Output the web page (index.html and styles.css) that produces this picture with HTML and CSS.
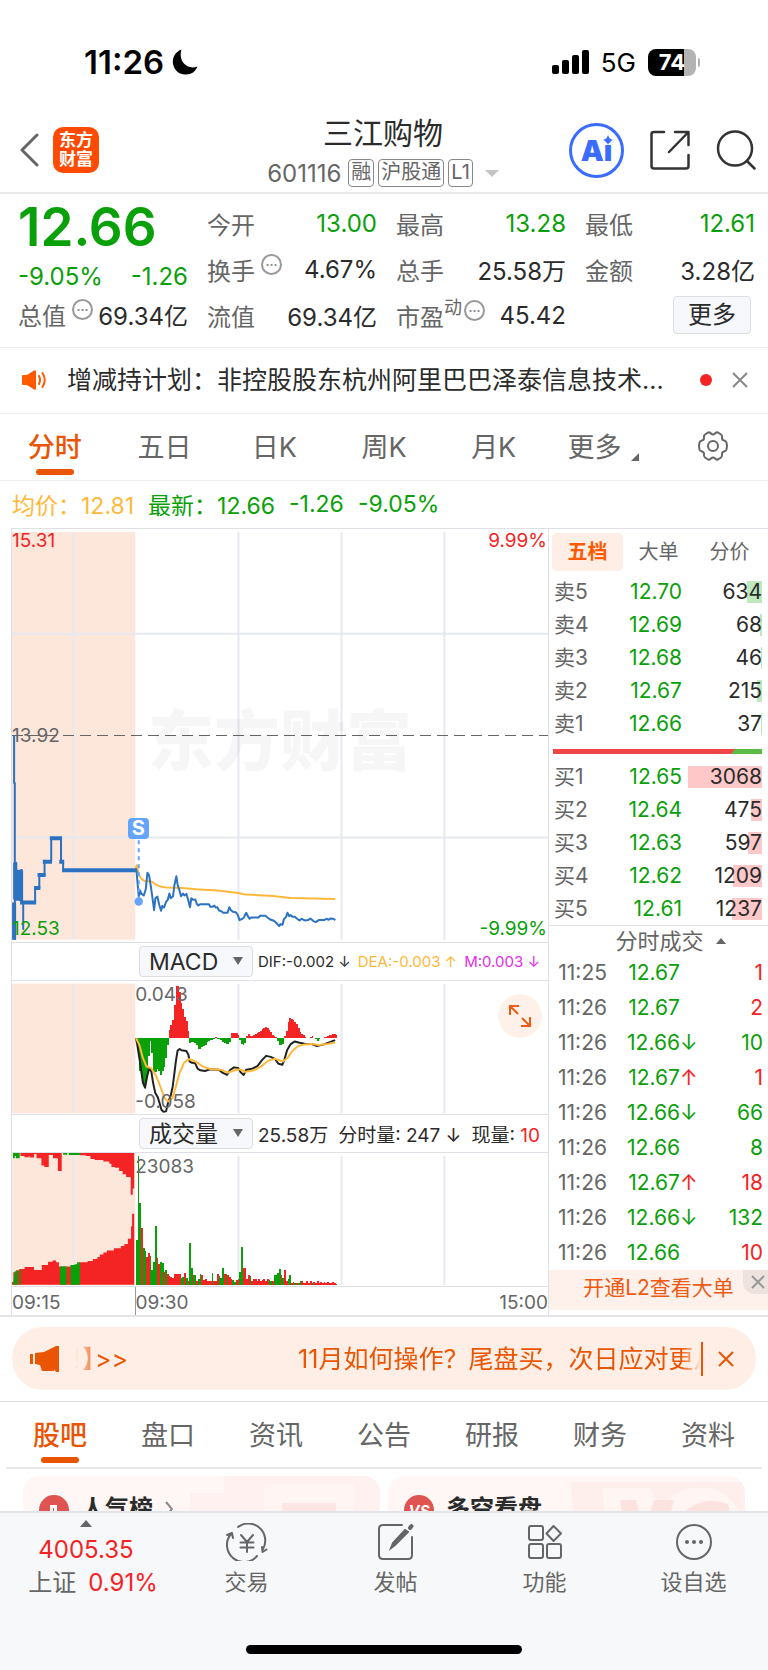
FILE: index.html
```html
<!DOCTYPE html>
<html lang="zh-CN">
<head>
  <meta charset="UTF-8">
  <meta name="viewport" content="width=device-width, initial-scale=1.0">
  <title>三江购物 601116</title>
  <link rel="stylesheet" href="styles.css">
</head>
<body>

  <div class="statusbar">
    <div class="status-left">
      <span class="clock">11:26</span>
      <svg width="26" height="26" viewBox="0 0 26 26"><path d="M9.500 0.500C3 3 0 9 1 15C2.500 22 8 26 14 25.500C19.500 25.500 23.500 22.500 25.500 17.500C20 19.500 14.500 18 11.500 14C8.500 10 8 5 9.500 0.500Z" fill="#000"/></svg>
    </div>
    <div class="status-right">
      <svg width="37" height="24" viewBox="0 0 37 24">
        <rect x="0" y="15" width="7" height="9" rx="2"/>
        <rect x="10" y="10" width="7" height="14" rx="2"/>
        <rect x="20" y="5" width="7" height="19" rx="2"/>
        <rect x="30" y="0" width="7" height="24" rx="2"/>
      </svg>
      <span class="network">5G</span>
      <span class="battery">74</span>
    </div>
  </div>

  <header class="header">
    <div class="header-left">
      <button class="icon-btn" aria-label="返回">
        <svg width="20" height="34" viewBox="0 0 20 34"><path d="M18 2L3 17L18 32" fill="none" stroke="#666" stroke-width="3" stroke-linecap="round" stroke-linejoin="round"/></svg>
      </button>
      <a class="logo" href="#">东方<br>财富</a>
    </div>
    <div class="header-title">
      <h1>三江购物</h1>
      <div class="code-row">
        <span class="code">601116</span>
        <span class="tag">融</span>
        <span class="tag">沪股通</span>
        <span class="tag">L1</span>
        <i class="caret-down"></i>
      </div>
    </div>
    <div class="header-right">
      <button class="ai-btn">Ai
        <svg width="10" height="10" viewBox="0 0 10 10"><path d="M5 0L6.500 3.500L10 5L6.500 6.500L5 10L3.500 6.500L0 5L3.500 3.500Z" fill="#3a6cff"/></svg>
      </button>
      <button class="icon-btn" aria-label="分享">
        <svg width="40" height="40" viewBox="0 0 40 40" fill="none" stroke="#333" stroke-width="2.500" stroke-linecap="round" stroke-linejoin="round">
          <path d="M14 2H4Q1.500 2 1.500 4V36Q1.500 38.500 4 38.500H36Q38.500 38.500 38.500 36V25"/>
          <path d="M25 2H38.500V15M38 2.500L19 22"/>
        </svg>
      </button>
      <button class="icon-btn" aria-label="搜索">
        <svg width="40" height="40" viewBox="0 0 40 40" fill="none" stroke="#333" stroke-width="2.500" stroke-linecap="round"><circle cx="19" cy="18.500" r="17"/><path d="M31 31L38.500 38.500"/></svg>
      </button>
    </div>
  </header>

  <main class="content">

    <section class="quote">
      <div class="quote-main">
        <div class="price">12.66</div>
        <div class="change"><span>-9.05%</span><span>-1.26</span></div>
        <div class="cell"><span class="name">总值<i class="dots">···</i></span><span>69.34亿</span></div>
      </div>
      <div class="quote-grid">
        <div class="cell"><span class="name">今开</span><span class="green">13.00</span></div>
        <div class="cell"><span class="name">最高</span><span class="green">13.28</span></div>
        <div class="cell"><span class="name">最低</span><span class="green">12.61</span></div>
        <div class="cell"><span class="name">换手<i class="dots">···</i></span><span>4.67%</span></div>
        <div class="cell"><span class="name">总手</span><span>25.58万</span></div>
        <div class="cell"><span class="name">金额</span><span>3.28亿</span></div>
        <div class="cell"><span class="name">流值</span><span>69.34亿</span></div>
        <div class="cell"><span class="name">市盈<sup>动</sup><i class="dots">···</i></span><span>45.42</span></div>
        <div class="cell cell-more"><button class="more-btn">更多</button></div>
      </div>
    </section>

    <section class="news">
      <svg width="26" height="20" viewBox="0 0 26 20">
        <path d="M1 6Q1 5 2 5H6L13 0.500Q15 -0.500 15 1.500V18.500Q15 20.500 13 19.500L6 15H2Q1 15 1 14Z" fill="#ff5a00"/>
        <path d="M18 6Q20 10 18 14M21.500 3Q26 10 21.500 17" fill="none" stroke="#ff5a00" stroke-width="2" stroke-linecap="round"/>
      </svg>
      <a class="news-text" href="#">增减持计划：非控股股东杭州阿里巴巴泽泰信息技术...</a>
      <i class="dot"></i>
      <button class="icon-btn" aria-label="关闭">
        <svg width="16" height="16" viewBox="0 0 16 16"><path d="M1 1L15 15M15 1L1 15" stroke="#888" stroke-width="2"/></svg>
      </button>
    </section>

    <nav class="tabs">
      <button class="tab active">分时</button>
      <button class="tab">五日</button>
      <button class="tab">日K</button>
      <button class="tab">周K</button>
      <button class="tab">月K</button>
      <button class="tab">更多<i class="corner"></i></button>
      <button class="tab" aria-label="设置">
        <svg width="32" height="32" viewBox="0 0 32 32" fill="none" stroke="#666" stroke-width="2" stroke-linejoin="round">
          <path d="M11 2.500Q13 2 14 3.500Q16 5.500 18 3.500Q19 2 21 2.500L24 4.500Q25.500 5.500 25 8Q25 10 27 10.500Q29 11 29.500 12.500Q30.500 16 29.500 19.500Q29 21 27 21.500Q25 22 25 24Q25.500 26.500 24 27.500L21 29.500Q19 30 18 28.500Q16 26.500 14 28.500Q13 30 11 29.500L8 27.500Q6.500 26.500 7 24Q7 22 5 21.500Q3 21 2.500 19.500Q1.500 16 2.500 12.500Q3 11 5 10.500Q7 10 7 8Q6.500 5.500 8 4.500Z"/>
          <circle cx="16" cy="16" r="5"/>
        </svg>
      </button>
    </nav>

    <div class="legend">
      <span class="gold">均价：12.81</span>
      <span class="green">最新：12.66</span>
      <span class="green">-1.26</span>
      <span class="green">-9.05%</span>
    </div>

    <section class="market">
      <div class="charts">

        <div class="plot plot-price">
          <span class="watermark">东方财富</span>
          <svg viewBox="34 24 1531 1245" preserveAspectRatio="none">
            <rect class="auction" x="34" y="33" width="352" height="1229"/>
            <path class="grid" d="M210 33V1262M681 33V1262M975 33V1262M1269 33V1262M34 340H1565M34 954H1565"/>
            <path class="base" d="M34 646H1565"/>
            <path class="avg" d="M387 1048L391 1036L395 1062Q402 1080 413 1085L434 1087Q448 1102 475 1105L520 1106L560 1110L620 1114L680 1121L700 1126L780 1130L830 1136L957 1139"/>
            <path class="line" d="M40 646V790H42V1262M42 1262V1030H46V1142H51V1054H55V1142H60V1052H62V1150H66V1230V1150H100V1106H112V1067H127V1027H146V956H174V1027H180V1053"/>
            <path class="line thick" d="M40 1150V1262M43 1030V1140M50 1054V1142M60 1054V1145M57 1150H103M97 1106H115M107 1067H130M122 1027H148M142 956H177M169 1027H183M177 1053H391"/>
            <g transform="translate(342 840) scale(.95 1)">
              <path class="line" d="M50 213L54 260L57 292L61 274L65 284L72 289L78 270L83 220L88 228L93 260L98 295L103 333L107 297L113 292L118 315L124 335L128 320L133 325L139 308L144 302L149 283L153 297L160 291L164 258L170 231L174 258L179 272L184 291L190 283L194 289L200 284L205 300L211 324L215 297L221 302L227 301L231 313L236 319L242 315H268L272 323H279L284 319L288 325L293 324L298 334L305 336L311 341H324L329 324L334 333L340 338L348 339L354 346L360 363L366 360L372 357L380 341L385 351L390 359L395 355H417L422 350H438L444 355L452 361L463 365L470 371L479 381L483 375L489 377L493 361L500 353L504 341L509 351L513 348L519 353L526 353L533 359L540 364L547 359L556 364L566 363L573 358L582 366L589 369L598 363L614 363L621 359L628 362L634 358L642 359L648 363"/>
            </g>
            <path class="signal" d="M396 962V1140"/>
            <ellipse cx="396" cy="1147" rx="12" ry="13" fill="#65a4fb"/>
          </svg>
          <span class="badge">S</span>
          <span class="lbl top-left red">15.31</span>
          <span class="lbl top-right red">9.99%</span>
          <span class="lbl mid-left">13.92</span>
          <span class="lbl bottom-left green">12.53</span>
          <span class="lbl bottom-right green">-9.99%</span>
        </div>

        <div class="strip">
          <label class="picker"><select aria-label="副图指标"><option>MACD</option></select></label>
          <div class="macd-values">
            <span>DIF:-0.002 ↓</span>
            <span class="gold">DEA:-0.003 ↑</span>
            <span class="pink">M:0.003 ↓</span>
          </div>
        </div>

        <div class="plot plot-sub">
          <svg viewBox="34 150 1531 405" preserveAspectRatio="none">
            <rect class="auction" x="34" y="158" width="352" height="395"/>
            <path class="grid" d="M210 158V553M681 158V553M975 158V553M1269 158V553"/>
            <g id="macdBars"></g>
            <path class="dif" d="M388 324L392 345L400 400L408 460L414 475L420 440L426 416L432 425L437 460L443 490L450 503L455 520L461 542L466 548L474 547L480 520L487 500L493 472L498 430L502 395L507 362L513 357L518 361L532 363L538 375L541 395L548 399L557 400L564 417L572 422L585 424L600 419L625 420L635 429L648 436L657 421L668 413L680 415L687 428L696 436L703 420L720 417L735 409L748 391L760 378L773 381L785 387L795 402L806 405L812 390L820 360L830 342L842 334L855 338L872 342L890 342L905 348L925 343L940 337L957 330"/>
            <path class="avg" d="M388 324L398 345L408 385L418 410L432 416L445 438L458 472L470 507L480 517L492 507L502 472L512 432L525 400L538 388L550 391L565 400L580 411L600 418L630 420L650 429L670 422L685 419L700 427L725 422L745 411L765 393L785 387L808 395L822 383L835 363L850 349L870 343L890 342L910 345L935 342L957 337"/>
          </svg>
          <span class="lbl sub-top">0.043</span>
          <span class="lbl sub-bottom">-0.058</span>
          <button class="expand" aria-label="全屏">
            <svg width="22" height="22" viewBox="0 0 22 22" fill="none" stroke="#ee5a12" stroke-width="2"><path d="M1 10V1H10M1 1L9 9M21 12V21H12M21 21L13 13"/></svg>
          </button>
        </div>

        <div class="strip">
          <label class="picker"><select aria-label="成交指标"><option>成交量</option></select></label>
          <div class="vol-values">
            <span>25.58万</span><span>分时量: 247 ↓</span><span>现量: <b class="red">10</b></span>
          </div>
        </div>

        <div class="plot plot-sub">
          <svg viewBox="34 127 1531 405" preserveAspectRatio="none">
            <rect class="auction" x="34" y="127" width="352" height="403"/>
            <path class="grid" d="M210 127V530M681 135V530M975 135V530M1269 135V530"/>
            <path class="up" d="M58 127V136H70V140H82V136H84V141H97V130H104V143H118V165H126V170H139V133H151V143H165V182H176V127ZM228 127V134H245V136H258V145H270V148H295V153H312V160H318V170H328V172H340V182H350V192H360V200H373V254H379V235H383V127Z"/>
            <path class="down" d="M37 127V143H42V136H45V143H56V127ZM180 127V132H192V127ZM196 127V133H228V127Z"/>
            <path class="up" d="M34 528V520H38V490H46V484H55V480H70V474H97V483H119V468H137V458H150V454H160V460H168V473H203V468H226V460H250V456H265V450H278V444H285V436H295V430H305V424H325V417H345V410H355V404H365V388H374V350H377V312H383V528Z"/>
            <path class="down" d="M37 528L42 488L50 484V528ZM55 528V481H59V528ZM171 528V473H190V528ZM201 528V468H213V466H220V460H228V528Z"/>
            <g id="volBars"></g>
          </svg>
          <span class="lbl sub-top">23083</span>
        </div>

        <div class="axis"><span>09:15</span><span class="open">09:30</span><span>15:00</span></div>
      </div>

      <aside class="side">
        <div class="side-tabs">
          <button class="side-tab active">五档</button>
          <button class="side-tab">大单</button>
          <button class="side-tab">分价</button>
        </div>
        <table class="book" id="sells"></table>
        <div class="ratio"><i></i></div>
        <table class="book" id="buys"></table>
        <button class="trades-head">分时成交<i class="caret-up"></i></button>
        <table class="trades" id="trades"></table>
        <div class="l2">
          <a href="#">开通L2查看大单</a>
          <button class="l2-close" aria-label="关闭">
            <svg width="14" height="14" viewBox="0 0 14 14"><path d="M1 1L13 13M13 1L1 13" stroke="#999" stroke-width="2"/></svg>
          </button>
        </div>
      </aside>
    </section>

    <section class="promo-wrap">
      <div class="promo">
        <svg width="30" height="26" viewBox="0 0 30 26" fill="#ea5504">
          <rect x="0" y="8" width="3" height="10"/>
          <path d="M5 7L14 6L26 0H29V26H26L24 23V25H12L10 19L5 18Z"/>
        </svg>
        <div class="marquee"><span class="tail">！】&gt;&gt;</span><span>11月如何操作？尾盘买，次日应对更从容</span></div>
        <button class="promo-close" aria-label="关闭">
          <svg width="16" height="16" viewBox="0 0 16 16"><path d="M1 1L15 15M15 1L1 15" stroke="#ea5504" stroke-width="2"/></svg>
        </button>
      </div>
    </section>

    <nav class="tabs info-tabs">
      <button class="tab active">股吧</button>
      <button class="tab">盘口</button>
      <button class="tab">资讯</button>
      <button class="tab">公告</button>
      <button class="tab">研报</button>
      <button class="tab">财务</button>
      <button class="tab">资料</button>
    </nav>

    <section class="cards">
      <a class="card" href="#">
        <svg width="30" height="30" viewBox="0 0 30 30"><circle cx="15" cy="15" r="15" fill="#df5450"/><path d="M6 24V17H11V10H18V17H24V24Z" fill="#fff"/><path d="M11 17V24M18 17V24M14.500 13V20" stroke="#df5450"/></svg>
        人气榜
        <svg width="8" height="16" viewBox="0 0 8 16"><path d="M1 1L7 8L1 15" fill="none" stroke="#888" stroke-width="2"/></svg>
        <svg class="deco" width="190" height="80" viewBox="0 0 190 80"><path d="M0 17H34V0H190V80H0Z" fill="#fef1ef"/><path d="M74 8H164V80H74Z" fill="#fff6f4"/><path d="M92 27H146V80H92Z" fill="#fde6e3"/></svg>
      </a>
      <a class="card" href="#">
        <span class="vs">VS</span>
        多空看盘
        <svg class="deco" width="175" height="80" viewBox="0 0 175 80"><path d="M0 0H175V80H10Z" fill="#feefed"/><path d="M32 6H80L90 26Q108 2 140 6Q165 12 172 40V80H40Z" fill="#fff5f3"/><path d="M50 18H66L74 52L84 18H104L88 80H62ZM112 80Q98 56 112 32Q132 12 158 22L162 40Q140 30 128 40Q124 52 150 56L160 80Z" fill="#fde3e0"/></svg>
      </a>
    </section>

  </main>

  <footer class="bottom">
    <div class="bottom-nav">
      <button class="index">
        <i class="caret-up"></i>
        <span class="red">4005.35</span>
        <span class="index-row"><span>上证</span><span class="red">0.91%</span></span>
      </button>
      <button class="nav-item">
        <svg width="42" height="38" viewBox="0 0 42 38" fill="none" stroke="#666" stroke-width="2" stroke-linecap="round" stroke-linejoin="round">
          <path d="M12 4A17 17 0 0 1 37 26M36.500 29L40.500 26.500M36.500 29L36 24"/>
          <path d="M31 33A17 17 0 0 1 5 11M1 12L6 10L7 15"/>
          <path d="M15 12L21 19L27 12M21 19V29M14.500 19.500H27.500M14.500 24.500H27.500"/>
        </svg>
        交易
      </button>
      <button class="nav-item">
        <svg width="38" height="38" viewBox="0 0 38 38" fill="none" stroke="#666" stroke-width="2" stroke-linecap="round">
          <path d="M25 2H6Q2 2 2 6V32Q2 36 6 36H31Q35 36 35 32V14"/>
          <path d="M14 25L16 20L28 7L31 9L18 22Z" fill="#666"/><path d="M33 5L34.500 3" stroke-width="4"/>
        </svg>
        发帖
      </button>
      <button class="nav-item">
        <svg width="36" height="38" viewBox="0 0 36 38" fill="none" stroke="#666" stroke-width="2" stroke-linejoin="round">
          <rect x="2" y="3" width="14" height="14" rx="2"/><rect x="2" y="21" width="14" height="14" rx="2"/><rect x="20" y="21" width="14" height="14" rx="2"/>
          <path d="M26.500 3L34 10.500L26.500 18L19.500 10.500Z"/>
        </svg>
        功能
      </button>
      <button class="nav-item">
        <svg width="38" height="38" viewBox="0 0 38 38"><circle cx="19" cy="19" r="17" fill="none" stroke="#666" stroke-width="2"/><g fill="#666"><circle cx="12" cy="19" r="2"/><circle cx="19" cy="19" r="2"/><circle cx="26" cy="19" r="2"/></g></svg>
        设自选
      </button>
    </div>
    <div class="home-bar"></div>
  </footer>

  <script src="script.js"></script>
</body>
</html>
```
FILE: styles.css
```css
* {
  box-sizing: border-box;
}

body {
  margin: 0;
  height: 100vh;
  display: flex;
  flex-direction: column;
  background: #fff;
  color: #2b2b2b;
  font-family: Inter, "Noto Sans CJK SC", sans-serif;
  font-size: 24px;
  overflow: hidden;
}

button, select {
  font: inherit;
  color: inherit;
  background: none;
  border: none;
  padding: 0;
  cursor: pointer;
}

a {
  color: inherit;
  text-decoration: none;
}

svg {
  display: block;
  flex: none;
}

.red { color: #f52424; }
.green { color: #0aa00a; }
.gold { color: #ffb83a; }
.pink { color: #e52de5; }

/* status bar */
.statusbar {
  flex: none;
  display: flex;
  justify-content: space-between;
  height: 78px;
  padding: 46px 72px 0 84px;
  color: #000;
}

.status-left, .status-right {
  display: flex;
  align-items: center;
  height: 32px;
}

.status-left {
  gap: 8px;
}

.clock {
  font-size: 33px;
  font-weight: 600;
}

.status-right {
  gap: 12px;
}

.network {
  font-size: 26px;
}

.battery {
  position: relative;
  width: 48px;
  height: 27px;
  line-height: 27px;
  border-radius: 8px;
  background: linear-gradient(to right, #000 74%, #b3b3b3 74%);
  color: #fff;
  font-size: 22px;
  font-weight: 700;
  text-align: center;
}

.battery::after {
  content: "";
  position: absolute;
  right: -4px;
  top: 9px;
  width: 2px;
  height: 9px;
  border-radius: 0 2px 2px 0;
  background: #b3b3b3;
}

/* header */
.header {
  flex: none;
  display: grid;
  grid-template-columns: 1fr auto 1fr;
  align-items: center;
  height: 116px;
  padding: 30px 12px 0 10px;
  border-bottom: 2px solid #eaeaea;
}

.header-left {
  display: flex;
  align-items: center;
  gap: 14px;
  padding-left: 9px;
}

.logo {
  width: 46px;
  height: 46px;
  padding-top: 4px;
  border-radius: 10px;
  background: #ff4a00;
  color: #fff;
  font-size: 17px;
  font-weight: 700;
  line-height: 19px;
  text-align: center;
}

.header-title h1 {
  margin: 0 0 6px;
  font-size: 30px;
  font-weight: 400;
  line-height: 40px;
  text-align: center;
}

.code-row {
  display: flex;
  align-items: center;
  gap: 4px;
  color: #666;
}

.code {
  margin-right: 3px;
}

.tag {
  height: 28px;
  padding: 0 2px;
  border: 1px solid #888;
  border-radius: 4px;
  font-size: 20px;
  line-height: 25px;
}

.caret-down {
  margin-left: 8px;
  border: 7px solid transparent;
  border-top-color: #c4c4c4;
  border-bottom: 0;
}

.caret-up {
  display: inline-block;
  border: 5px solid transparent;
  border-bottom: 6px solid #666;
  border-top: 0;
}

.header-right {
  display: flex;
  align-items: center;
  justify-content: flex-end;
  gap: 26px;
}

.ai-btn {
  position: relative;
  width: 55px;
  height: 55px;
  border: 3px solid #3a6cff;
  border-radius: 50%;
  color: #3a6cff;
  font-size: 29px;
  font-weight: 900;
}

.ai-btn svg {
  position: absolute;
  right: 8px;
  top: 9px;
}

/* quote */
.quote {
  display: grid;
  grid-template-columns: 170fr 548fr;
  column-gap: 19px;
  padding: 2px 13px 9px 18px;
  border-bottom: 1px solid #eee;
}

.price {
  color: #0aa00a;
  font-size: 53px;
  font-weight: 600;
  line-height: 62px;
}

.change {
  display: flex;
  justify-content: space-between;
  color: #0aa00a;
  line-height: 38px;
}

.quote-grid {
  display: grid;
  grid-template-columns: repeat(3, 1fr);
  column-gap: 19px;
  padding-top: 4px;
}

.cell {
  display: flex;
  align-items: center;
  justify-content: space-between;
  height: 46px;
  white-space: nowrap;
}

.quote-main .cell {
  height: 36px;
}

.name {
  display: flex;
  align-items: center;
  color: #666;
}

.name sup {
  align-self: flex-start;
  font-size: 18px;
  line-height: 20px;
}

.dots {
  width: 21px;
  height: 21px;
  margin: 0 0 10px 6px;
  border: 2px solid #999;
  border-radius: 50%;
  color: #888;
  font-size: 12px;
  font-style: normal;
  font-weight: 700;
  line-height: 17px;
  text-align: center;
}

sup + .dots {
  margin-left: 2px;
}

.cell-more {
  justify-content: flex-end;
  padding-right: 4px;
}

.more-btn {
  width: 78px;
  height: 38px;
  border: 1px solid #dcdde3;
  border-radius: 4px;
  background: #f7f8fb;
  line-height: 34px;
}

/* news */
.news {
  display: flex;
  align-items: center;
  height: 66px;
  padding: 0 20px 2px 21px;
  border-bottom: 1px solid #eee;
}

.news-text {
  flex: 1;
  margin-left: 20px;
  font-size: 25px;
  line-height: 36px;
  white-space: nowrap;
}

.dot {
  width: 12px;
  height: 12px;
  margin: 0 20px;
  border-radius: 50%;
  background: #f52424;
}

/* tabs */
.tabs {
  display: grid;
  grid-template-columns: repeat(7, 1fr);
  height: 67px;
  border-bottom: 1px solid #eee;
}

.tab {
  position: relative;
  display: flex;
  align-items: center;
  justify-content: center;
  padding-bottom: 3px;
  color: #666;
  font-size: 27px;
}

.tab.active {
  color: #ea5504;
  font-weight: 500;
}

.tab.active::after {
  content: "";
  position: absolute;
  bottom: 5px;
  width: 38px;
  height: 6px;
  border-radius: 3px;
  background: #ea5504;
}

.corner {
  align-self: flex-end;
  margin: 0 0 16px 10px;
  border: 4px solid #666;
  border-top-color: transparent;
  border-left-color: transparent;
}

.legend {
  display: flex;
  align-items: center;
  gap: 14px;
  height: 47px;
  padding: 0 0 2px 12px;
  font-size: 23px;
}

/* charts and order book */
.market {
  display: flex;
  padding-left: 11px;
  border-bottom: 2px solid #e4e4e8;
}

.charts {
  flex: 1;
  min-width: 0;
  border-right: 1px solid #dfe0e6;
  border-left: 1px solid #dfe0e6;
}

.plot {
  position: relative;
  border-top: 1px solid #dfe0e6;
  border-bottom: 1px solid #dfe0e6;
}

.plot > svg {
  width: 100%;
  height: 100%;
}

.plot-price {
  height: 415px;
}

.plot-sub {
  height: 135px;
}

.auction { fill: #fde6da; }
.up { fill: #f52424; }
.down { fill: #0aa00a; }

rect.up, rect.down {
  shape-rendering: crispEdges;
}

.grid, .base, .avg, .line, .dif, .signal {
  vector-effect: non-scaling-stroke;
}

.grid { fill: none; stroke: #e6e9f0; stroke-width: 2px; }
.base { stroke: #666; stroke-width: 1px; stroke-dasharray: 11 6; shape-rendering: crispEdges; }
.avg { fill: none; stroke: #ffb83a; stroke-width: 2px; }
.line { fill: none; stroke: #2b72c2; stroke-width: 2px; stroke-linejoin: round; }
.line.thick { stroke-width: 4px; }
.dif { fill: none; stroke: #222; stroke-width: 2px; stroke-linejoin: round; }
.signal { stroke: #65a4fb; stroke-width: 2px; stroke-dasharray: 4 4; }

.watermark {
  position: absolute;
  left: 50%;
  top: 50%;
  transform: translate(-50%, -50%);
  color: #00000009;
  font-size: 66px;
  font-weight: 900;
  white-space: nowrap;
}

.badge {
  position: absolute;
  left: 22%;
  top: 70%;
  width: 21px;
  height: 21px;
  margin-left: -2px;
  border-radius: 4px;
  background: #65a4fb;
  color: #fff;
  font-size: 20px;
  font-weight: 700;
  line-height: 21px;
  text-align: center;
}

.lbl {
  position: absolute;
  color: #666;
  font-size: 19px;
  line-height: 24px;
}

.lbl.red { color: #f52424; }
.lbl.green { color: #0aa00a; }

.top-left { left: 0; top: 0; }
.top-right { right: 1px; top: 0; }
.mid-left { left: 0; top: calc(50% - 12px); }
.bottom-left { left: 0; bottom: 1px; }
.bottom-right { right: 1px; bottom: 1px; }
.sub-top { left: 23%; top: 2px; }
.sub-bottom { left: 23%; bottom: 0; }

.expand {
  position: absolute;
  right: 6px;
  top: 13px;
  width: 44px;
  height: 44px;
  padding: 11px;
  border-radius: 50%;
  background: #fef1ea;
}

.strip {
  display: flex;
  align-items: center;
  height: 37px;
  padding: 0 8px 0 127px;
  white-space: nowrap;
}

.picker {
  position: relative;
  flex: none;
  margin-right: 5px;
}

.picker::after {
  content: "";
  position: absolute;
  right: 10px;
  top: 11px;
  border: 5px solid transparent;
  border-top: 8px solid #666;
  border-bottom: 0;
  pointer-events: none;
}

.picker select {
  display: block;
  width: 114px;
  height: 31px;
  padding-left: 9px;
  border: 1px solid #dcdde3;
  border-radius: 4px;
  background: #f7f8fb;
  font-size: 23px;
  line-height: 28px;
  appearance: none;
}

.macd-values, .vol-values {
  flex: 1;
  display: flex;
  justify-content: space-between;
  font-size: 15px;
}

.vol-values {
  font-size: 19px;
}

.vol-values b {
  font-weight: 400;
}

.axis {
  display: flex;
  justify-content: space-between;
  height: 28px;
  color: #666;
  font-size: 19px;
  line-height: 32px;
}

.axis .open {
  flex: 1;
  margin-left: 74px;
  border-left: 1px solid #999;
}

.side {
  flex: none;
  width: 219px;
  border-top: 1px solid #dfe0e6;
}

.side-tabs {
  display: flex;
  padding: 4px 3px;
}

.side-tab {
  flex: 1;
  height: 38px;
  border-radius: 5px;
  color: #666;
  font-size: 20px;
  line-height: 34px;
}

.side-tab.active {
  background: #ffeee5;
  color: #ff5a00;
  font-weight: 700;
}

.book, .trades {
  width: 100%;
  border-collapse: collapse;
  table-layout: fixed;
  font-size: 21px;
}

.book td, .trades td {
  height: 33px;
  padding: 0;
  line-height: 24px;
  text-align: right;
}

.book td:first-child {
  width: 58px;
  padding-left: 5px;
  color: #666;
  text-align: left;
}

.book td:nth-child(2) {
  width: 75px;
  color: #0aa00a;
}

.book td:last-child {
  padding-right: 6px;
}

.vol {
  position: relative;
  display: block;
}

.vol i {
  position: absolute;
  right: 0;
  top: 1px;
  z-index: -1;
  height: 22px;
  background: #bfe8bf;
}

#buys .vol i {
  background: #ffc8c8;
}

.ratio {
  height: 5px;
  margin: 9px 6px 6px 4px;
  background: #5bbb45;
}

.ratio i {
  display: block;
  width: 87%;
  height: 5px;
  background: #f04545;
  clip-path: polygon(0 0, 100% 0, 98% 100%, 0 100%);
}

.trades-head {
  display: block;
  width: 100%;
  height: 30px;
  padding-left: 24px;
  border-top: 1px solid #dfe0e6;
  color: #666;
  font-size: 22px;
  line-height: 26px;
}

.trades-head .caret-up {
  margin: 0 0 5px 12px;
}

.trades td {
  height: 35px;
}

.trades td:first-child {
  width: 58px;
  color: #666;
}

.trades td:nth-child(2) {
  width: 73px;
}

.trades td:nth-child(3) {
  width: 16px;
  text-align: left;
}

.trades td:last-child {
  padding-right: 5px;
}

.l2 {
  position: relative;
  height: 40px;
  background: #fef0ea;
  color: #ee5a12;
  font-size: 21px;
  line-height: 36px;
  text-align: center;
}

.l2-close {
  position: absolute;
  right: 0;
  top: 0;
  width: 25px;
  height: 24px;
  padding: 0 3px 0 8px;
  border-radius: 0 0 0 12px;
  background: #ede2dd;
}

/* promo marquee */
.promo-wrap {
  padding: 10px 12px 11px;
  border-bottom: 1px solid #e2e2e2;
}

.promo {
  display: flex;
  align-items: center;
  height: 63px;
  padding: 0 22px 0 18px;
  border-radius: 31px;
  background: #ffeee5;
  color: #ea5504;
  font-size: 25px;
}

.marquee {
  flex: 1;
  display: flex;
  gap: 170px;
  margin-left: 10px;
  padding-bottom: 4px;
  overflow: hidden;
  white-space: nowrap;
  -webkit-mask-image: linear-gradient(to right, transparent 5px, #000 30px, #000 calc(100% - 20px), transparent);
  mask-image: linear-gradient(to right, transparent 5px, #000 30px, #000 calc(100% - 20px), transparent);
}

.tail {
  font-feature-settings: "palt";
}

.promo-close {
  padding: 9px 0 9px 15px;
  border-left: 2px solid #ea5504;
}

/* info tabs */
.info-tabs {
  margin: 0 6px;
  border-bottom: 2px solid #e6e8ea;
}

.info-tabs .tab.active::after {
  bottom: 4px;
}

/* cards */
.content {
  flex: 1;
  min-height: 0;
  overflow: hidden;
}

.cards {
  display: grid;
  grid-template-columns: 1fr 1fr;
  gap: 8px;
  padding: 7px 23px;
}

.card {
  position: relative;
  display: flex;
  align-items: flex-start;
  gap: 12px;
  height: 120px;
  padding: 19px 16px;
  border-radius: 16px;
  background: #fff7f5;
  font-weight: 700;
  line-height: 28px;
  overflow: hidden;
}

.card svg:nth-child(2) {
  margin-top: 6px;
}

.card .deco {
  position: absolute;
  right: 0;
  top: 0;
  margin: 0;
}

.vs {
  width: 30px;
  height: 30px;
  border-radius: 50%;
  background: #df5450;
  color: #fff;
  font-size: 15px;
  font-style: italic;
  line-height: 32px;
  text-align: center;
}

/* bottom bar */
.bottom {
  flex: none;
  height: 159px;
  border-top: 2px solid #e2e4e8;
  background: #f7f8fa;
}

.bottom-nav {
  display: grid;
  grid-template-columns: 172px repeat(4, 1fr);
  height: 132px;
  color: #666;
}

.nav-item {
  display: flex;
  flex-direction: column;
  align-items: center;
  gap: 5px;
  padding-top: 10px;
  font-size: 22px;
  line-height: 32px;
}

.index {
  display: flex;
  flex-direction: column;
  align-items: center;
  padding-top: 7px;
  font-size: 24px;
  line-height: 33px;
  white-space: nowrap;
}

.index-row {
  display: flex;
  gap: 12px;
  padding-left: 14px;
}

.index .caret-up {
  margin-bottom: 6px;
  border-width: 0 6px 7px;
}

.home-bar {
  width: 36%;
  height: 9px;
  margin: 0 auto;
  border-radius: 5px;
  background: #000;
}
```
FILE: script.js
```js
const SVG_NS = "http://www.w3.org/2000/svg";

function bar(group, x, y, height, className) {
  const rect = document.createElementNS(SVG_NS, "rect");
  rect.setAttribute("x", x);
  rect.setAttribute("y", y);
  rect.setAttribute("width", 5);
  rect.setAttribute("height", height);
  rect.setAttribute("class", className);
  group.appendChild(rect);
}

// one value per minute from 09:30
const macd = [
  -4, -50, -100, -120, -140, -152, -120, -55, -8, -45, -105, -103, -95, -100, -113, -100, -88, -60, -20,
  25, 40, 55, 100, 158, 160, 140, 108, 90, 65, 52, 22,
  -14, -12, -12, -15, -22, -33, -33, -28, -25, -20, -12, -8, -6, -5, -2, 2, -4, -2, -6, -12, -15, -18, -18, -12,
  15, 15, 17, 15, 10, -5, -18, -22, -15, 8, 12, 8, 8, 10, 12, 15, 18, 22, 28, 32, 35, 32, 25, 18, 10, 5, 2,
  -8, -22, -22, -18, 5, 22, 48, 60, 58, 54, 50, 42, 32, 18, 12, 10, 4, 1, 1, 3, 5, 1, -4, -8, -4, 1, 1, 2, 4,
  8, 10, 10, 12, 14, 10
];

// negative values are falling minutes
const volume = [
  -135, -393, -248, 172, -112, -104, 85, 97, -88, -45, -68, -180, 80, 62, -68, -65, 38, -45, 33, 25, 22, 20,
  34, 34, 34, 33, -20, -22, 36, -20, 10, -127, -52, 28, -28, 10, -18, -32, 28, 14, 16, 12, 10, 12, -35, 10, 12,
  32, -26, -20, -50, 32, -34, 28, 24, 18, -14, -8, 14, 16, -38, -115, 52, 50, 16, 28, -26, 10, 16, 16, 10, 16,
  10, 14, 18, 10, 16, -14, -10, 10, -28, -28, -36, -48, 30, -20, 44, 12, -16, -30, 5, 7, -4, 6, -4, -12, 10, 6,
  4, 12, 5, 11, -4, 7, 5, 10, 6, 8, 5, 7, 4, 7, 4, 5, 9, 6, -3
];

const macdBars = document.getElementById("macdBars");
macd.forEach((v, i) => {
  bar(macdBars, 388 + i * 4.92, v > 0 ? 324 - v : 324, Math.abs(v), v > 0 ? "up" : "down");
});

const volBars = document.getElementById("volBars");
volume.forEach((v, i) => {
  bar(volBars, 388 + i * 4.92, 528 - Math.abs(v), Math.abs(v), v > 0 ? "up" : "down");
});

function renderBook(id, rows) {
  document.getElementById(id).innerHTML = rows.map(([name, price, vol]) => `
    <tr>
      <td>${name}</td>
      <td>${price}</td>
      <td><span class="vol"><i style="width:${Math.max(1, Math.round(vol / 3068 * 74))}px"></i>${vol}</span></td>
    </tr>`).join("");
}

renderBook("sells", [
  ["卖5", "12.70", 634],
  ["卖4", "12.69", 68],
  ["卖3", "12.68", 46],
  ["卖2", "12.67", 215],
  ["卖1", "12.66", 37]
]);

renderBook("buys", [
  ["买1", "12.65", 3068],
  ["买2", "12.64", 475],
  ["买3", "12.63", 597],
  ["买4", "12.62", 1209],
  ["买5", "12.61", 1237]
]);

const trades = [
  ["11:25", "12.67", "", 1, "red"],
  ["11:26", "12.67", "", 2, "red"],
  ["11:26", "12.66", "↓", 10, "green"],
  ["11:26", "12.67", "↑", 1, "red"],
  ["11:26", "12.66", "↓", 66, "green"],
  ["11:26", "12.66", "", 8, "green"],
  ["11:26", "12.67", "↑", 18, "red"],
  ["11:26", "12.66", "↓", 132, "green"],
  ["11:26", "12.66", "", 10, "red"]
];

document.getElementById("trades").innerHTML = trades.map(([time, price, arrow, vol, color]) => `
  <tr>
    <td>${time}</td>
    <td class="green">${price}</td>
    <td class="${arrow === "↑" ? "red" : "green"}">${arrow}</td>
    <td class="${color}">${vol}</td>
  </tr>`).join("");
```
